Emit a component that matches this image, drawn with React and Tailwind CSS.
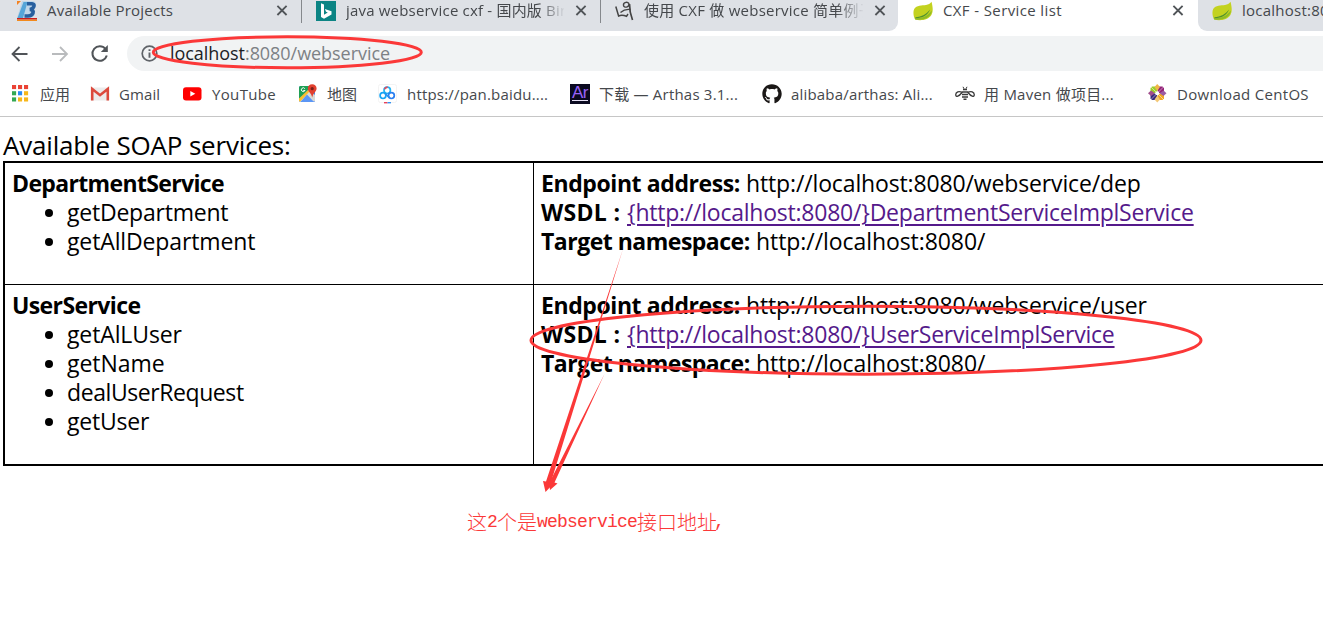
import React from "react";
import { FaGithub } from "react-icons/fa";

const RED = "#fb3838";

function Close({ className }) {
  return (
    <svg className={"shrink-0 " + (className || "")} width="12" height="12" viewBox="0 0 12 12">
      <path d="M1.4 .8 L10.6 10 M10.6 .8 L1.4 10" stroke="#505458" strokeWidth="1.8" />
    </svg>
  );
}

function Leaf() {
  return (
    <svg className="shrink-0" width="20" height="20" viewBox="0 0 20 20">
      <path d="M18.5 .8 C19.6 5 20.6 10 18.4 14 C15.5 19 8 20 2.2 18.6 C.8 16.5 -.4 11 1.2 8 C3.5 4.2 9 4.6 13 4 C15.5 3.6 17.2 2.6 18.5 .8Z" fill="#c3d21f" />
      <path d="M18.8 9.5 C18.6 15 13 19.8 2.2 18.6 L1.8 17.2 C9 17.6 15 15 18.8 9.5Z" fill="#8dbb27" />
      <path d="M2.4 16.2 C8.500 16 14 13 17 8.500 C15 14.200 9 17.4 2.4 17.2Z" fill="#4f9130" />
    </svg>
  );
}

function Blocks() {
  return (
    <svg className="shrink-0" width="20" height="20" viewBox="0 0 20 20">
      <path d="M5 0 H15 Q19 0 19 4 Q19 6.500 17 8 Q19 10 18 13 Q17 17 12 17 H0 Z" fill="#bfd6e8" />
      <path d="M6.500 1 H10.500 L6 17 H0.500Z" fill="#55a5d8" />
      <path d="M10 2.800 H15 Q17.500 3 17 5 Q16.500 7.500 13 8.500 Q17 9.200 16 12 Q14.800 15 11 15 H7.500" fill="none" stroke="#285f9e" strokeWidth="3.600" />
      <path d="M0 0 H4 L0 4Z" fill="#f58220" />
      <path d="M0 17.800 H20" stroke="#c81e1e" strokeWidth="1.600" />
      <path d="M0 19.300 H20" stroke="#f28a1c" strokeWidth="1.400" />
    </svg>
  );
}

function Bing() {
  return (
    <svg className="shrink-0" width="20" height="20" viewBox="0 0 20 20">
      <rect width="20" height="20" fill="#0c8484" />
      <path d="M5 2.300 L8 3.400 V13.800 L11.800 11.600 L10 10.800 L8.900 8 L15.500 10.300 V13.500 L8 17.800 L5 16.100Z" fill="#fff" />
    </svg>
  );
}

function Sketch() {
  return (
    <svg className="shrink-0" width="20" height="20" viewBox="0 0 20 20" fill="none" stroke="#444">
      <path d="M.8 5.500 L3.600 15 Q7 13.500 11.500 15.300 L13 13" strokeWidth="1.500" />
      <path d="M8.500 4.300 C8 1 13.500 .2 14 3 C14.200 6.500 9 7.300 8.500 4.300Z" strokeWidth="1.400" />
      <path d="M5.500 11.500 Q10 7.500 15.500 8.500" strokeWidth="1.300" />
      <path d="M14.500 3 C14.500 9 15.500 14 17.500 19" strokeWidth="1.700" />
    </svg>
  );
}

function AppsGrid() {
  const colors = ["#ea4335", "#ea4335", "#ea4335", "#34a853", "#2a8af5", "#f7b71b", "#34a853", "#f7b71b", "#f7b71b"];
  return (
    <svg className="shrink-0" width="20" height="20" viewBox="0 0 20 20">
      {colors.map((c, i) => (
        <rect key={i} x={1 + (i % 3) * 6} y={1 + Math.floor(i / 3) * 6.2} width="4.100" height="4.100" fill={c} />
      ))}
    </svg>
  );
}

function Gmail() {
  return (
    <svg className="shrink-0" width="20" height="20" viewBox="0 0 20 20">
      <rect x="1" y="3.500" width="18" height="13" fill="#ececec" />
      <path d="M2.200 16.500 V5 L10 11.200 L17.800 5 V16.500" fill="none" stroke="#dc4a3d" strokeWidth="2.600" />
    </svg>
  );
}

function YouTube() {
  return (
    <svg className="shrink-0" width="20" height="20" viewBox="0 0 20 20">
      <rect x="0" y="3.200" width="18.500" height="13.200" rx="3" fill="#f00" />
      <path d="M7.300 7 L12.300 9.800 L7.300 12.600Z" fill="#fff" />
    </svg>
  );
}

function Maps() {
  return (
    <svg className="shrink-0" width="20" height="20" viewBox="0 0 20 20">
      <rect x="1" y="2" width="16" height="16" rx="1.500" fill="#4285f4" />
      <path d="M1 3.500 Q1 2 2.500 2 H14 L1 15Z" fill="#1fa055" />
      <path d="M1 17 L12 6 L17 11 V17 L14.500 18 L9 11.500 L2.500 18Z" fill="#d9dad6" />
      <path d="M1 14.500 L10.500 5.500 L12 7 L2 17.800 L1 17Z" fill="#fbc02d" />
      <path d="M9 10.500 L16 18 H2.500Z" fill="#5b96f5" />
      <path d="M6.800 4.600 A1.900 1.900 0 1 0 7 6.500 H5.300" fill="none" stroke="#fff" strokeWidth="1" />
      <path d="M14.200 .3 C11.600 .3 9.800 2.100 9.800 4.500 C9.800 7.500 13.400 9 14.200 13.500 C15 9 18.600 7.500 18.600 4.500 C18.600 2.100 16.800 .3 14.200 .3Z" fill="#e2402f" />
      <circle cx="14.200" cy="4.700" r="1.600" fill="#7b1f19" />
    </svg>
  );
}

function Baidu() {
  return (
    <svg className="shrink-0" width="20" height="20" viewBox="0 0 20 20" fill="none">
      <rect x=".5" y=".5" width="18" height="18" rx="2" fill="#fff" stroke="#f3f3f3" />
      <circle cx="9.200" cy="6.300" r="3.200" stroke="#25b4f2" strokeWidth="1.700" />
      <path d="M6.500 5.300 Q7.500 3 9.600 3.100" stroke="#e9485b" strokeWidth="1.600" />
      <circle cx="5" cy="11.600" r="2.900" stroke="#16a5f5" strokeWidth="1.700" />
      <circle cx="13.400" cy="11.600" r="2.900" stroke="#2a7ff0" strokeWidth="1.700" />
      <path d="M7 9.500 L11.400 13.600" stroke="#2a90f0" strokeWidth="1.700" />
      <path d="M6 18.700 H9.500" stroke="#e84057" strokeWidth="1.400" />
      <path d="M9.500 18.700 H13" stroke="#3191f2" strokeWidth="1.400" />
    </svg>
  );
}

function Arthas() {
  return (
    <div className="flex h-5 w-5 shrink-0 justify-center bg-[#0b0a20] font-['Liberation_Sans'] text-[17px] leading-[18px] tracking-[-0.5px] text-[#9a62f8] underline decoration-[#e6e0f4] decoration-1 underline-offset-[2px]">
      <span>Ar</span>
    </div>
  );
}

function Bee() {
  return (
    <svg className="shrink-0" width="20" height="20" viewBox="0 0 20 20" fill="none" stroke="#3b3b3b">
      <path d="M7 8.500 C4 6.500 .8 8 .7 10.800 C.8 13.500 4 12.500 7 8.500Z M13 8.500 C16 6.500 19.200 8 19.300 10.800 C19.200 13.500 16 12.500 13 8.500Z" strokeWidth="1.300" />
      <path d="M8 5.500 H12 M6.500 8 H13.500 M7 10.500 H13 M7 13 H13 M8.500 15.200 H11.500" strokeWidth="1.500" />
      <path d="M8 2.800 L9 4.800 M12 2.800 L11 4.800" strokeWidth="1" />
    </svg>
  );
}

function CentOS() {
  return (
    <svg className="shrink-0" width="20" height="20" viewBox="0 0 20 20">
      <path d="M9 2.500 V9 H2.500 V4 L4 2.500Z" fill="#9ccd2a" />
      <path d="M9.500 2.500 V9 H16 V4 L14.500 2.500Z" fill="#932279" />
      <path d="M9 16 V9.500 H2.500 V14.500 L4 16Z" fill="#3a2a7c" />
      <path d="M9.500 16 V9.500 H16 V14.500 L14.500 16Z" fill="#efa724" />
      <path d="M9.250 0 L12 3 L9.250 7 L6.500 3Z" fill="#f0b648" />
      <path d="M9.250 18.500 L12 15.500 L9.250 11.500 L6.500 15.500Z" fill="#f3c878" />
      <path d="M0 9.250 L3 6.500 L7 9.250 L3 12Z" fill="#a14f8c" />
      <path d="M18.500 9.250 L15.500 6.500 L11.500 9.250 L15.500 12Z" fill="#9b5ba4" />
      <path d="M3 3 L15.500 15.500 M15.500 3 L3 15.500" stroke="#fff" strokeWidth=".5" />
      <circle cx="9.250" cy="9.250" r="2" fill="#fff" />
    </svg>
  );
}

function Tabs() {
  return (
    <div className="flex h-[31px] bg-white text-[15px] leading-[21px] text-[#45484c]">
      <div className="flex w-[898px] shrink-0 rounded-br-[9px] bg-[#dee1e6]">
        <div className="flex h-[21px] w-[301px] shrink-0 items-center pl-[17px]">
          <Blocks />
          <span className="ml-[10px] w-[229px] shrink-0 tracking-[0.2px]">Available Projects</span>
          <Close />
        </div>
        <div className="h-[23px] w-px shrink-0 bg-[#85888c]" />
        <div className="flex h-[21px] w-[298px] shrink-0 items-center pl-[14px]">
          <Bing />
          <span className="ml-[10px] mr-[11px] w-[218px] shrink-0 overflow-hidden whitespace-nowrap tracking-[0.19px] [mask-image:linear-gradient(to_right,black_192px,transparent_220px)]">
            java webservice cxf - 国内版 Bing
          </span>
          <Close />
        </div>
        <div className="h-[23px] w-px shrink-0 bg-[#85888c]" />
        <div className="flex h-[21px] w-[297px] shrink-0 items-center pl-[14px]">
          <Sketch />
          <span className="ml-[9px] mr-[11px] w-[219px] shrink-0 overflow-hidden whitespace-nowrap tracking-[0.24px] [mask-image:linear-gradient(to_right,black_192px,transparent_220px)]">
            使用 CXF 做 webservice 简单例子
          </span>
          <Close />
        </div>
      </div>
      <div className="flex h-[21px] w-[300px] shrink-0 items-center pl-[15px]">
        <Leaf />
        <span className="ml-[10px] w-[229px] shrink-0 tracking-[0.38px]">CXF - Service list</span>
        <Close />
      </div>
      <div className="flex h-[31px] min-w-0 flex-1 overflow-hidden rounded-bl-[9px] bg-[#dee1e6] pl-[14px]">
        <div className="flex h-[21px] items-center">
          <Leaf />
          <span className="ml-[10px] whitespace-nowrap tracking-[0.25px]">localhost:8080</span>
        </div>
      </div>
    </div>
  );
}

function Toolbar() {
  return (
    <div className="flex h-[45px] items-center pl-[11px]">
      <svg width="18" height="18" viewBox="0 0 18 18" fill="none" stroke="#505458" strokeWidth="1.800">
        <path d="M16.500 9 H1.800 M8.500 2 L1.500 9 L8.500 16" />
      </svg>
      <svg className="ml-[22px]" width="18" height="18" viewBox="0 0 18 18" fill="none" stroke="#b9bbbd" strokeWidth="1.800">
        <path d="M1 9 H15.700 M9 2 L16 9 L9 16" />
      </svg>
      <svg className="ml-[21px]" width="19" height="19" viewBox="0 0 19 19" fill="none" stroke="#505458" strokeWidth="2">
        <path d="M15.500 5 A7.300 7.300 0 1 0 16.800 11.500" />
        <path d="M17.800 1 V8 H10.800Z" fill="#505458" stroke="none" />
      </svg>
      <div className="ml-[18px] flex h-[35px] flex-1 items-center rounded-l-full bg-[#f1f3f4] pl-[14px]">
        <svg width="17" height="17" viewBox="0 0 17 17" fill="none" stroke="#5f6368" strokeWidth="1.700">
          <circle cx="8.500" cy="8.500" r="7.300" />
          <path d="M8.500 7.500 V12.800 M8.500 4.300 V6" strokeWidth="1.900" />
        </svg>
        <span className="ml-[12px] text-[18px] tracking-[-0.05px] text-[#202124]">
          localhost<span className="text-[#7d8185]">:8080/webservice</span>
        </span>
      </div>
    </div>
  );
}

const bookmarks = [
  [AppsGrid, "应用", ""],
  [Gmail, "Gmail", "tracking-[0.1px]"],
  [YouTube, "YouTube", "tracking-[0.35px]"],
  [Maps, "地图", ""],
  [Baidu, "https://pan.baidu....", "tracking-[0.19px]"],
  [Arthas, "下载 — Arthas 3.1...", "tracking-[0.21px]"],
  [() => <FaGithub className="h-5 w-5 shrink-0 text-[#1b1817]" />, "alibaba/arthas: Ali...", "tracking-[0.19px]"],
  [Bee, "用 Maven 做项目...", "tracking-[0.24px]"],
  [CentOS, "Download CentOS", "tracking-[0.31px]"],
];

function Bookmarks() {
  return (
    <div className="grid h-[41px] grid-cols-[79px_93px_115px_80px_192px_192px_193px_193px_175px] border-b border-[#c6c6c6] pb-[4px] pl-[11px] text-[15px] text-[#45484c]">
      {bookmarks.map(([Icon, label, tracking]) => (
        <div key={label} className="flex items-center gap-[9px] whitespace-nowrap">
          <Icon />
          <span className={tracking}>{label}</span>
        </div>
      ))}
    </div>
  );
}

function Operations({ title, titleClass, items }) {
  return (
    <div className="border-r border-black pl-[7px] pt-[6px]">
      <div className={"font-bold " + titleClass}>{title}</div>
      <ul>
        {items.map(([name, tracking]) => (
          <li key={name} className="flex items-center pl-[33px]">
            <span className="mr-[14px] mt-[1px] h-[8px] w-[8px] rounded-full bg-black" />
            <span className={tracking}>{name}</span>
          </li>
        ))}
      </ul>
    </div>
  );
}

function Details({ address, service }) {
  return (
    <div className="whitespace-nowrap pl-[7px] pt-[6px]">
      <div className="flex">
        <b className="w-[205px] tracking-[-0.41px]">Endpoint address:</b>
        <span className="tracking-[-0.14px]">{address}</span>
      </div>
      <div className="flex">
        <b className="w-[86px] tracking-[0.3px]">WSDL :</b>
        <a className="tracking-[-0.23px] text-[#551a8b] underline decoration-[1.500px] underline-offset-[3px]">{service}</a>
      </div>
      <div className="flex">
        <b className="w-[215px] tracking-[-0.5px]">Target namespace:</b>
        <span className="tracking-[-0.07px]">http://localhost:8080/</span>
      </div>
    </div>
  );
}

function Services() {
  return (
    <div className="pl-[3px] pt-[12px] text-black">
      <div className="h-[32px] text-[26px] leading-[32px] tracking-[-0.18px]">Available SOAP services:</div>
      <div className="w-[1400px] border-2 border-black text-[23px] leading-[29px]">
        <div className="grid h-[122px] grid-cols-[529px_1fr] border-b border-black">
          <Operations
            title="DepartmentService"
            titleClass="tracking-[-0.65px]"
            items={[["getDepartment", "tracking-[-0.22px]"], ["getAllDepartment", "tracking-[-0.13px]"]]}
          />
          <Details address="http://localhost:8080/webservice/dep" service="{http://localhost:8080/}DepartmentServiceImplService" />
        </div>
        <div className="grid h-[179px] grid-cols-[529px_1fr]">
          <Operations
            title="UserService"
            titleClass="tracking-[-0.6px]"
            items={[
              ["getAlLUser", "tracking-[-0.12px]"],
              ["getName", "tracking-[-0.05px]"],
              ["dealUserRequest", "tracking-[-0.42px]"],
              ["getUser", "tracking-[-0.2px]"],
            ]}
          />
          <Details address="http://localhost:8080/webservice/user" service="{http://localhost:8080/}UserServiceImplService" />
        </div>
      </div>
      <div className="mt-[42px] flex h-[28px] items-center whitespace-nowrap pl-[464px] font-['Noto_Sans_CJK_SC',sans-serif] text-[20px] font-light leading-[28px] text-[#fb3838]">
        <span>这</span>
        <span className="font-['Liberation_Mono',monospace] text-[18px] font-normal tracking-[-0.8px]">2</span>
        <span>个是</span>
        <span className="font-['Liberation_Mono',monospace] text-[18px] font-normal tracking-[-0.8px]">webservice</span>
        <span>接口地址</span>
        <span className="-ml-[3px] font-['Liberation_Mono',monospace] text-[18px] font-normal tracking-[-0.8px]">,</span>
      </div>
    </div>
  );
}

export default function App() {
  return (
    <div className="relative h-[621px] w-[1323px] overflow-hidden bg-white font-['Open_Sans','Noto_Sans_CJK_SC',sans-serif]">
      <Tabs />
      <Toolbar />
      <Bookmarks />
      <Services />
      <svg className="pointer-events-none absolute inset-0" width="1323" height="621" viewBox="0 0 1323 621">
        <ellipse cx="287.300" cy="52.300" rx="134" ry="15.500" fill="none" stroke={RED} strokeWidth="3" />
        <ellipse cx="866" cy="340.200" rx="335" ry="34" fill="none" stroke={RED} strokeWidth="3" />
        <path d="M623 249 L551 482 L553.500 483.500 L545.500 492 L543 481 L546 481.500Z" fill={RED} />
        <path d="M604.500 374 L554.500 482.500 L557.500 483.500 L550 490 L548.500 479.500 L550.500 480.500Z" fill={RED} />
      </svg>
    </div>
  );
}
